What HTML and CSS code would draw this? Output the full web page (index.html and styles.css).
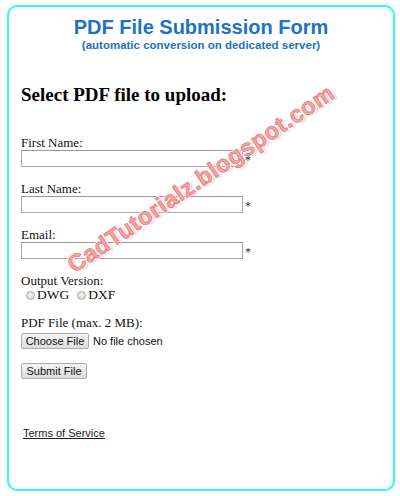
FILE: index.html
```html
<!DOCTYPE html>
<html>
<head>
<meta charset="utf-8">
<link rel="stylesheet" href="styles.css">
</head>
<body>
<div class="panel">
  <h1 class="title">PDF File Submission Form</h1>
  <p class="subtitle">(automatic conversion on dedicated server)</p>
  <h2 class="heading">Select PDF file to upload:</h2>
  <form class="form">
    <div class="field">
      <label class="lbl">First Name:</label>
      <div class="row"><input class="text" type="text"><span class="req">*</span></div>
    </div>
    <div class="field">
      <label class="lbl">Last Name:</label>
      <div class="row"><input class="text" type="text"><span class="req">*</span></div>
    </div>
    <div class="field">
      <label class="lbl">Email:</label>
      <div class="row"><input class="text" type="text"><span class="req">*</span></div>
    </div>
    <div class="field field-radio">
      <div class="lbl">Output Version:</div>
      <div class="radios">
        <input class="radio" type="radio" name="v"><span class="rlabel">DWG</span>
        <input class="radio" type="radio" name="v"><span class="rlabel">DXF</span>
      </div>
    </div>
    <div class="field field-file">
      <div class="lbl">PDF File (max. 2 MB):</div>
      <div class="filerow"><button type="button" class="btn choose">Choose File</button><span class="nofile">No file chosen</span></div>
    </div>
    <div class="field">
      <button type="button" class="btn submit">Submit File</button>
    </div>
  </form>
  <a class="terms" href="#">Terms of Service</a>
  <div class="watermark">CadTutorialz.blogspot.com</div>
</div>
</body>
</html>
```
FILE: styles.css
```css
html, body {
  margin: 0;
  padding: 0;
  background: #fff;
}
body {
  font-family: "Liberation Serif", "Times New Roman", serif;
  color: #111;
}
.panel {
  position: relative;
  box-sizing: border-box;
  margin: 5px 5px 0 7px;
  width: 388px;
  height: 486px;
  border: 2px solid #33f5f5;
  border-radius: 10px;
  padding: 9px 12px 0 12px;
  overflow: hidden;
}
.title {
  margin: 0;
  font-family: "Liberation Sans", Arial, sans-serif;
  font-weight: bold;
  font-size: 20px;
  line-height: 22px;
  color: #1d72c2;
  text-align: center;
}
.subtitle {
  margin: 0;
  font-family: "Liberation Sans", Arial, sans-serif;
  font-weight: bold;
  font-size: 11.5px;
  line-height: 14px;
  color: #1d72c2;
  text-align: center;
}
.heading {
  margin: 32px 0 0 0;
  font-size: 19px;
  line-height: 22px;
  font-weight: bold;
  color: #000;
}
.form {
  margin: 30px 0 0 0;
}
.field {
  margin-bottom: 15px;
}
.lbl {
  display: block;
  font-size: 13px;
  line-height: 14px;
}
.row {
  display: flex;
  align-items: center;
}
.text {
  box-sizing: border-box;
  width: 222px;
  height: 17px;
  margin: 0;
  padding: 0 2px;
  border: 1px solid #a9a9a9;
  border-top-color: #9a9a9a;
  background: #fff;
}
.req {
  position: relative;
  z-index: 2;
  font-size: 12px;
  line-height: 12px;
  margin-left: 2px;
  margin-top: 3px;
  color: #333;
}
.radios {
  display: flex;
  align-items: center;
  height: 14px;
  padding-left: 5px;
  font-size: 13.5px;
}
.radio {
  -webkit-appearance: none;
  appearance: none;
  box-sizing: border-box;
  width: 9px;
  height: 9px;
  margin: 0 2px 0 0;
  border: 1px solid #a8a8a8;
  border-radius: 50%;
  background: radial-gradient(circle at 50% 40%, #f6f6f6, #cdcdcd);
}
.rlabel {
  margin-right: 8px;
}
.field-radio {
  margin-bottom: 14px;
}
.field-file {
  margin-bottom: 12px;
}
.filerow {
  display: flex;
  align-items: center;
  margin-top: 3px;
}
.btn {
  box-sizing: border-box;
  margin: 0;
  padding: 0;
  height: 16px;
  white-space: nowrap;
  font-family: "Liberation Sans", Arial, sans-serif;
  font-size: 11px;
  line-height: 14px;
  color: #111;
  border: 1px solid #acacac;
  border-radius: 2px;
  background: linear-gradient(#f3f3f3, #dedede);
}
.choose {
  width: 68px;
}
.submit {
  width: 66px;
}
.nofile {
  margin-left: 4px;
  font-family: "Liberation Sans", Arial, sans-serif;
  font-size: 11px;
  color: #111;
}
.terms {
  display: inline-block;
  margin: 32px 0 0 2px;
  font-family: "Liberation Sans", Arial, sans-serif;
  font-size: 11px;
  line-height: 14px;
  color: #222;
  text-decoration: underline;
}
.watermark {
  position: absolute;
  left: 50%;
  top: 172px;
  transform: translate(-50%, -50%) rotate(-34deg);
  white-space: nowrap;
  font-family: "Liberation Sans", Arial, sans-serif;
  font-weight: bold;
  font-size: 23.5px;
  letter-spacing: 0.6px;
  color: #f5a3a3;
  -webkit-text-stroke: 0.6px #e46a6a;
  text-shadow: 1px 1px 0 #fff, -1px -1px 0 #fff, 1px -1px 0 #fff, -1px 1px 0 #fff, 2px 2px 2px rgba(120,120,120,0.35);
  pointer-events: none;
}
```
